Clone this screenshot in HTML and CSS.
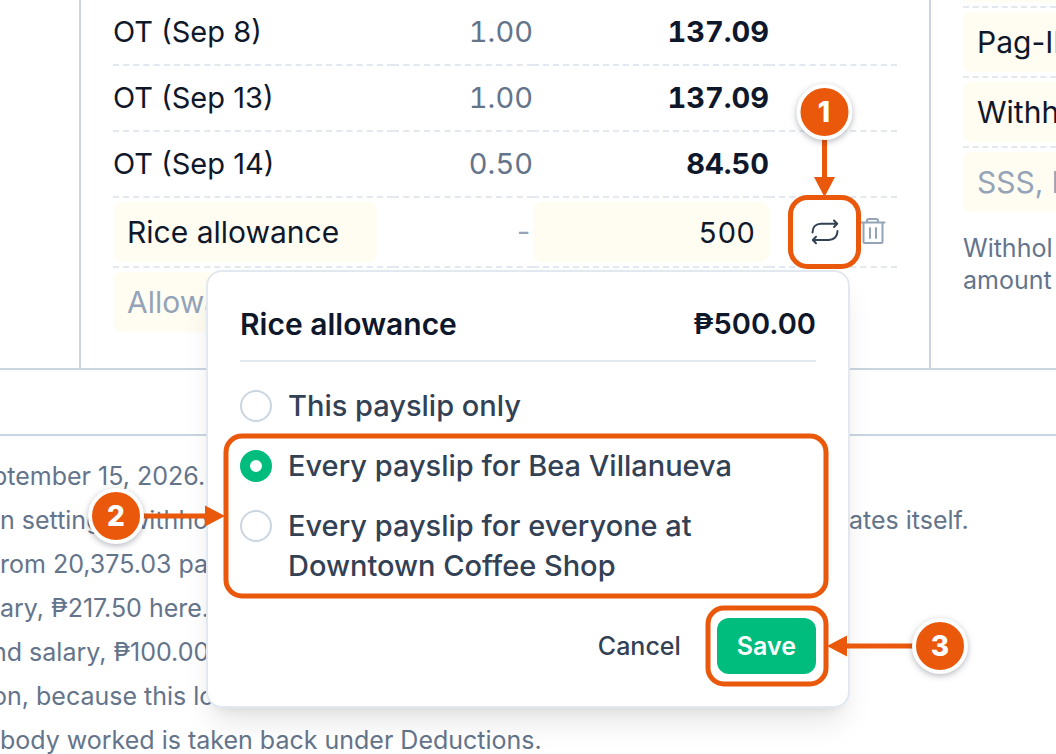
FILE: index.html
```html
<!DOCTYPE html>
<html lang="en">
<head>
<meta charset="utf-8">
<meta name="viewport" content="width=device-width, initial-scale=1">
<title>Payslip</title>
<link rel="stylesheet" href="styles.css">
</head>
<body>
<main class="page">
  <section class="columns">
    <div class="gutter"></div>
    <div class="panel">
      <table class="earnings">
        <colgroup><col><col class="col-qty"><col class="col-amount"><col class="col-actions"></colgroup>
        <tbody>
          <tr><td>OT (Sep 8)</td><td class="qty">1.00</td><td class="amount">137.09</td><td></td></tr>
          <tr><td>OT (Sep 13)</td><td class="qty">1.00</td><td class="amount">137.09</td><td></td></tr>
          <tr><td>OT (Sep 14)</td><td class="qty">0.50</td><td class="amount">84.50</td><td></td></tr>
          <tr class="editable">
            <td class="name-cell"><input class="field" type="text" value="Rice allowance" aria-label="Allowance name"></td>
            <td class="qty muted">-</td>
            <td><input class="field field-number" type="text" value="500" aria-label="Allowance amount"></td>
            <td>
              <div class="actions">
                <button class="icon-button" type="button" aria-label="Repeat">
                  <svg class="icon icon-dark" viewBox="0 0 28 28"><path d="M1.5 14.500C1.500 9 5 5.700 10 5.700H26M23 2.500l3.200 3.200L23 9M26.500 13C26.500 18.500 23 22 18 22H2M5 18.800L1.800 22 5 25.200"/></svg>
                </button>
                <button class="icon-button" type="button" aria-label="Delete">
                  <svg class="icon" viewBox="0 0 28 28"><path d="M2.500 4.500H25.500M8 4.500V2.700Q8 1 9.700 1H17.300Q19 1 19 2.700V4.500M4.500 4.500V23.500Q4.500 25 6 25H22Q23.500 25 23.500 23.500V4.500M11 10V20M17 10V20"/></svg>
                </button>
              </div>
            </td>
          </tr>
          <tr class="editable last">
            <td class="name-cell"><input class="field" type="text" placeholder="Allowance" aria-label="New allowance"></td>
            <td></td><td></td><td></td>
          </tr>
        </tbody>
      </table>
    </div>
    <div class="panel side">
      <div class="side-row side-cut"><div class="field-end"></div></div>
      <div class="side-row"><input class="field" type="text" value="Pag-IBIG" aria-label="Deduction 1"></div>
      <div class="side-row"><input class="field" type="text" value="Withholding" aria-label="Deduction 2"></div>
      <div class="side-row last"><input class="field" type="text" placeholder="SSS, loan" aria-label="New deduction"></div>
      <p class="hint">Withhol<br>amount</p>
    </div>
  </section>
  <div class="band"></div>
  <ul class="notes">
    <li class="clipped">ptember 15, 2026.</li>
    <li class="split"><span>n settings, withho</span><span class="tail">ates itself.</span></li>
    <li>rom 20,375.03 pa</li>
    <li>ary, ₱217.50 here.</li>
    <li class="clipped">nd salary, ₱100.00</li>
    <li class="clipped">on, because this lo</li>
    <li>body worked is taken back under Deductions.</li>
  </ul>

  <form class="popover">
    <header class="popover-head"><h2>Rice allowance</h2><strong>₱500.00</strong></header>
    <div class="options">
      <label class="option"><input type="radio" name="scope"><span>This payslip only</span></label>
      <label class="option"><input type="radio" name="scope" checked><span>Every payslip for Bea Villanueva</span></label>
      <label class="option"><input type="radio" name="scope"><span>Every payslip for everyone at Downtown Coffee Shop</span></label>
    </div>
    <footer class="popover-foot">
      <button class="button" type="button">Cancel</button>
      <button class="button primary" type="button">Save</button>
    </footer>
  </form>

  <svg class="callouts" width="1056" height="754" viewBox="0 0 1056 754">
    <g class="frames">
      <rect x="790.500" y="197.500" width="68" height="69" rx="17"/>
      <rect x="226" y="436" width="600" height="160" rx="16"/>
      <rect x="708" y="608" width="118" height="76" rx="16"/>
      <path d="M824.500 138V180M142 516H208M914 646H844"/>
    </g>
    <path class="heads" d="M814 177H835L824.500 197ZM205 505.500V526.500L225 516ZM847 635.500V656.500L827 646Z"/>
    <g class="badges">
      <circle cx="824.500" cy="112" r="26"/><circle cx="116" cy="516" r="26"/><circle cx="940" cy="646" r="26"/>
    </g>
    <g class="numbers">
      <text x="824" y="122">1</text><text x="116" y="526">2</text><text x="940" y="656">3</text>
    </g>
  </svg>
</main>
</body>
</html>
```
FILE: styles.css
```css
:root {
  --ink: #0f172a;
  --slate: #334155;
  --muted: #64748b;
  --faint: #94a3b8;
  --line: #cbd5e1;
  --soft: #e2e8f0;
  --field: #fffdf2;
  --orange: #ea580c;
  --green: #00bc7d;
}
* { box-sizing: border-box; }
body {
  margin: 0;
  background: #fff;
  color: var(--ink);
  font: 400 29px/40px Inter, "Open Sans", sans-serif;
}
button, input { font: inherit; color: inherit; }
.page { position: relative; min-height: 100vh; overflow: hidden; }
.columns {
  display: grid;
  grid-template-columns: 79px minmax(0, 1fr) 127px;
  border-bottom: 2px solid var(--line);
}
.panel { border-left: 2px solid var(--line); padding: 0 32px 32px; }
.earnings { width: 100%; table-layout: fixed; border-collapse: separate; border-spacing: 0; }
.col-qty { width: 140px; }
.col-amount { width: 236px; }
.col-actions { width: 128px; }
.earnings td { height: 66px; padding: 0; border-bottom: 2px dashed var(--soft); vertical-align: middle; }
.earnings .editable td { height: 70px; padding: 4px 0; }
.earnings .editable .name-cell { padding-right: 16px; }
.earnings .last td { border-bottom: 0; height: 68px; }
.qty, .amount { text-align: right; font-variant-numeric: tabular-nums; }
.qty { color: var(--muted); }
.qty.muted { color: var(--faint); }
.amount { font-weight: 700; }
.field {
  display: block;
  width: 100%;
  height: 60px;
  padding: 0 14px;
  border: 0;
  border-radius: 8px;
  background: var(--field);
  font-size: 30px;
}
.field::placeholder { color: var(--faint); opacity: 1; }
.field-number { font-size: 29px; text-align: right; font-variant-numeric: tabular-nums; }
.actions { display: flex; justify-content: flex-end; }
.icon-button {
  display: grid;
  place-items: center;
  width: 48px;
  height: 48px;
  padding: 0;
  border: 0;
  background: none;
}
.icon { width: 28px; height: 28px; fill: none; stroke: var(--faint); stroke-width: 2; stroke-linecap: round; stroke-linejoin: round; }
.icon-dark { stroke: var(--slate); }
.side { padding-right: 0; overflow: hidden; white-space: nowrap; }
.side-row { padding: 4px 0; border-bottom: 2px dashed var(--soft); }
.side-cut { padding-top: 0; }
.side-row.last { border-bottom: 0; }
.side .field { padding-right: 0; border-radius: 8px 0 0 8px; }
.field-end { height: 2px; border-radius: 0 0 0 8px; background: var(--field); }
.hint { margin: 16px 0 0; font-size: 25px; line-height: 32px; color: var(--muted); }
.band { height: 66px; border-bottom: 2px solid var(--line); }
.notes {
  display: grid;
  gap: 12px;
  margin: 0;
  padding: 24px 0 0;
  list-style: none;
  color: var(--muted);
  font-size: 25px;
  line-height: 32px;
  white-space: nowrap;
}
.split { display: grid; grid-template-columns: 849px 1fr; }
.clipped { text-indent: -8px; }
.popover {
  position: absolute;
  top: 270px;
  left: 206px;
  width: 644px;
  padding: 32px;
  border: 2px solid var(--soft);
  border-radius: 16px;
  background: #fff;
  box-shadow: 0 20px 30px -6px rgb(0 0 0 / 10%), 0 8px 12px -8px rgb(0 0 0 / 10%);
}
.popover-head {
  display: flex;
  justify-content: space-between;
  padding-bottom: 16px;
  border-bottom: 2px solid var(--soft);
}
.popover-head h2, .popover-head strong { margin: 0; font-size: 30px; font-weight: 600; }
.popover-head strong { font-size: 29px; }
.options { display: grid; gap: 20px; margin: 24px 0 32px; color: var(--slate); font-weight: 500; }
.option { display: flex; align-items: flex-start; gap: 16px; }
.option input {
  flex: none;
  appearance: none;
  width: 32px;
  height: 32px;
  margin: 4px 0 0;
  border: 2px solid var(--line);
  border-radius: 50%;
  background: #fff;
}
.option input:checked { border: 10px solid var(--green); }
.popover-foot { display: flex; justify-content: flex-end; gap: 16px; }
.button {
  height: 56px;
  padding: 0 20px;
  border: 0;
  border-radius: 12px;
  background: none;
  color: var(--slate);
  font-size: 25px;
  font-weight: 500;
}
.primary { background: var(--green); color: #fff; font-weight: 600; }
.callouts { position: absolute; top: 0; left: 0; pointer-events: none; }
.frames { fill: none; stroke: var(--orange); stroke-width: 5; }
.heads { fill: var(--orange); }
.badges { fill: var(--orange); stroke: #fff; stroke-width: 4; filter: drop-shadow(0 2px 3px rgb(15 23 42 / 30%)); }
.numbers { fill: #fff; font-size: 28px; font-weight: 800; text-anchor: middle; }
```
